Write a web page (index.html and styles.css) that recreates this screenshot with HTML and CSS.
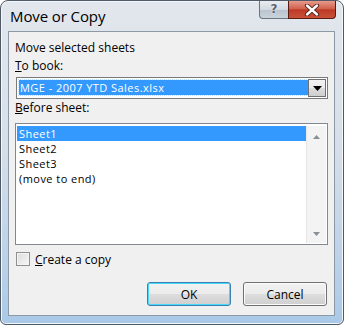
FILE: index.html
```html
<!DOCTYPE html>
<html lang="en">
<head>
    <meta charset="UTF-8">
    <meta name="viewport" content="width=device-width, initial-scale=1.0">
    <title>Move or Copy</title>
    <link rel="stylesheet" href="styles.css">
</head>
<body>

<div class="window">
    <div class="titlebar">
        <span class="title">Move or Copy</span>
        <div class="caption-btns">
            <div class="btn-help">?</div>
            <div class="btn-close">
                <svg width="18" height="12" viewBox="0 0 18 12">
                    <path d="M4 1.5 L14 10.5 M14 1.5 L4 10.5" stroke="#4a1a12" stroke-width="4.2" stroke-linecap="round"/>
                    <path d="M4 1.5 L14 10.5 M14 1.5 L4 10.5" stroke="#ffffff" stroke-width="2.4" stroke-linecap="round"/>
                </svg>
            </div>
        </div>
    </div>

    <div class="client">
        <div class="label first">Move selected sheets</div>
        <div class="label"><u>T</u>o book:</div>

        <div class="combo">
            <div class="combo-value"><span>MGE - 2007 YTD Sales.xlsx</span></div>
            <div class="combo-btn">
                <svg width="9" height="5" viewBox="0 0 9 5"><path d="M0 0 H9 L4.5 5 Z" fill="#000"/></svg>
            </div>
        </div>

        <div class="label"><u>B</u>efore sheet:</div>

        <div class="listbox">
            <ul class="items">
                <li class="selected">Sheet1</li>
                <li>Sheet2</li>
                <li>Sheet3</li>
                <li>(move to end)</li>
            </ul>
            <div class="scrollbar">
                <svg width="7" height="4" viewBox="0 0 7 4"><path d="M0 4 L3.5 0 L7 4 Z" fill="#8a8f94"/></svg>
                <svg width="7" height="4" viewBox="0 0 7 4"><path d="M0 0 H7 L3.5 4 Z" fill="#8a8f94"/></svg>
            </div>
        </div>

        <label class="check">
            <span class="box"></span>
            <span><u>C</u>reate a copy</span>
        </label>

        <div class="buttons">
            <button class="btn default">OK</button>
            <button class="btn">Cancel</button>
        </div>
    </div>
</div>

</body>
</html>
```

FILE: styles.css
```css
body {
    margin: 0;
    background: #ffffff;
    font-family: "Open Sans", "Noto Sans", sans-serif;
}
.window {
    width: 344px;
    height: 325px;
    box-sizing: border-box;
    border: 1px solid #4f5a66;
    border-radius: 8px 8px 6px 6px;
    background: linear-gradient(to bottom, #e2e7ed 0%, #d6dfe9 45%, #bcd2e8 80%, #a9c9e8 100%);
    box-shadow: inset 0 0 0 1px #f4f7fa;
    display: flex;
    flex-direction: column;
}
.titlebar {
    height: 30px;
    display: flex;
    justify-content: space-between;
    align-items: flex-start;
    padding: 0 7px 0 9px;
}
.title {
    font-size: 15px;
    color: #000;
    margin-top: 5px;
    letter-spacing: -0.1px;
}
.caption-btns {
    display: flex;
}
.btn-help {
    width: 29px;
    height: 18px;
    box-sizing: border-box;
    border: 1px solid #6a7580;
    border-top: none;
    border-right: none;
    border-radius: 0 0 0 4px;
    background: linear-gradient(to bottom, #e9edf1 0%, #d2d9e0 50%, #b9c3cd 51%, #c9d3dc 100%);
    font-family: "DejaVu Sans", sans-serif;
    font-weight: bold;
    font-size: 12px;
    line-height: 17px;
    text-align: center;
    color: #5b6570;
    text-shadow: 0 0 2px #fff;
}
.btn-close {
    width: 48px;
    height: 18px;
    box-sizing: border-box;
    border: 1px solid #5a1c12;
    border-top: none;
    border-radius: 0 0 4px 0;
    background: linear-gradient(to bottom, #e69a8c 0%, #d2624e 45%, #bc3a26 52%, #c95237 100%);
    display: flex;
    align-items: center;
    justify-content: center;
}
.client {
    margin: 0 8px 0 7px;
    height: 285px;
    box-sizing: border-box;
    border: 1px solid #8c98a4;
    background: #f0f0f0;
    padding: 0 6px 0 6px;
    font-size: 12px;
    color: #000;
}
.label {
    height: 18px;
    line-height: 18px;
}
.label.first {
    margin-top: 7px;
}
.combo {
    margin: 2px 0 0 1px;
    width: 312px;
    height: 22px;
    box-sizing: border-box;
    border: 1px solid #7a7a7a;
    background: #ffffff;
    display: flex;
    padding: 1px 1px 1px 2px;
}
.combo-value {
    flex: 1;
    padding: 1px 0 2px 0;
}
.combo-value span {
    display: block;
    height: 15px;
    line-height: 15px;
    font-size: 11px;
    letter-spacing: 0.45px;
    background: #3399ff;
    color: #ffffff;
    padding-left: 1px;
    outline: 1px dotted #b9dcff;
}
.combo-btn {
    width: 18px;
    box-sizing: border-box;
    border: 1px solid #707070;
    background: linear-gradient(to bottom, #f2f2f2 0%, #ebebeb 50%, #dddddd 51%, #cfcfcf 100%);
    display: flex;
    align-items: center;
    justify-content: center;
}
.listbox {
    margin-top: 6px;
    width: 313px;
    height: 122px;
    box-sizing: border-box;
    border: 1px solid #828790;
    background: #ffffff;
    display: flex;
    padding: 2px 1px 1px 1px;
}
.items {
    list-style: none;
    margin: 0;
    padding: 0;
    flex: 1;
}
.items li {
    height: 15px;
    line-height: 15px;
    font-size: 11px;
    letter-spacing: 0.45px;
    padding-left: 2px;
}
.items li.selected {
    background: #3399ff;
    color: #ffffff;
}
.scrollbar {
    width: 19px;
    background: #f3f3f3;
    border-left: 1px solid #e6e6e6;
    display: flex;
    flex-direction: column;
    align-items: center;
    justify-content: space-between;
    padding: 9px 0 7px 0;
}
.check {
    display: flex;
    align-items: center;
    margin-top: 7px;
    margin-left: 1px;
    height: 14px;
}
.box {
    width: 14px;
    height: 14px;
    box-sizing: border-box;
    border: 1px solid #8e8f8f;
    background: linear-gradient(135deg, #dcdcdc 0%, #f6f6f6 100%);
    box-shadow: inset 0 0 0 1px #f4f4f4;
    margin-right: 5px;
}
.buttons {
    display: flex;
    justify-content: flex-end;
    gap: 12px;
    margin-top: 16px;
    padding-right: 1px;
}
.btn {
    width: 84px;
    height: 24px;
    box-sizing: border-box;
    border: 1px solid #707070;
    border-radius: 3px;
    background: linear-gradient(to bottom, #f2f2f2 0%, #ebebeb 50%, #dddddd 51%, #cfcfcf 100%);
    box-shadow: inset 0 0 0 1px #fbfbfb;
    font-family: "Open Sans", "Noto Sans", sans-serif;
    font-size: 12px;
    color: #000;
    padding: 0;
}
.btn.default {
    border-color: #3c7fb1;
    box-shadow: inset 0 0 0 1px #48d8fb;
}
```
